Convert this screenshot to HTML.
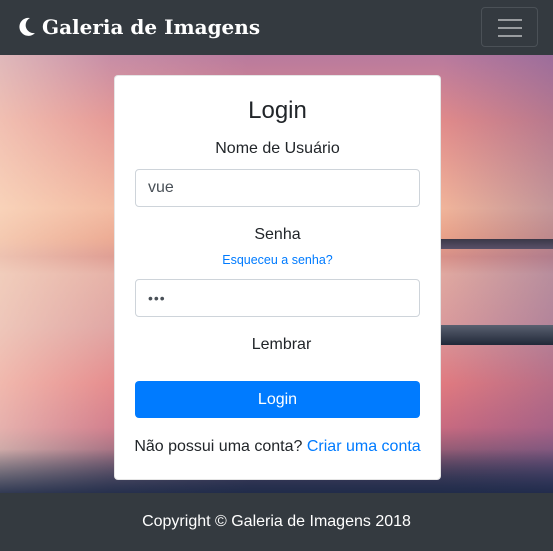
<!DOCTYPE html>
<html><head><meta charset="utf-8"><style>
*{box-sizing:border-box;margin:0;padding:0}
body{width:553px;height:549px;overflow:hidden;font-family:"Liberation Sans",Arial,sans-serif;color:#212529;background:#343a40;position:relative}
.nav{position:absolute;left:0;top:0;width:553px;height:55px;background:#343a40}
.brand{position:absolute;left:42px;top:13px;color:#fff;font-family:"DejaVu Serif","Liberation Serif",serif;font-weight:bold;font-size:20px;line-height:28px}
.moon{position:absolute;left:17px;top:17px}
.tog{position:absolute;left:481px;top:7px;width:57px;height:40px;border:1px solid #4b5157;border-radius:4px}
.tog i{position:absolute;left:16px;width:24px;height:2px;background:#9a9da0}
.bg{position:absolute;left:0;top:55px;width:553px;height:438px;
background:
linear-gradient(180deg,rgba(0,0,0,0) 0,rgba(0,0,0,0) 90%,rgba(30,40,70,.85) 100%),
linear-gradient(90deg,rgba(255,235,210,.55) 0,rgba(255,220,200,.2) 20%,rgba(0,0,0,0) 45%,rgba(0,0,0,0) 80%,rgba(90,80,150,.3) 100%),
linear-gradient(180deg,#b87a9e 0,#e08a8a 15%,#f0b49a 35%,#e8a088 42%,#d89088 46%,#e0a8a0 50%,#d99a9c 62%,#e07a80 75%,#c86a80 85%,#304060 100%)}
.dock{position:absolute;left:440px;top:270px;width:113px;height:20px;background:linear-gradient(180deg,#5a6070,#202838)}
.hill{position:absolute;left:440px;top:184px;width:113px;height:10px;background:linear-gradient(180deg,#3a3848,#5a5068)}
.card{position:absolute;left:114px;top:75px;width:327px;height:405px;background:#fff;border-radius:4px;border:1px solid rgba(0,0,0,.1)}
.c{position:absolute;left:0;width:100%;text-align:center}
.inp{position:absolute;left:20px;width:285px;height:38px;border:1px solid #ced4da;border-radius:4px;font-size:16px;padding:0 12px;line-height:36px;color:#495057}
.btn{position:absolute;left:20px;top:305px;width:285px;height:37px;background:#007bff;border-radius:4px;color:#fff;text-align:center;line-height:37px;font-size:16px}
a{color:#007bff;text-decoration:none}
.foot{position:absolute;left:0;top:493px;width:553px;height:56px;background:#343a40;color:#fff;text-align:center;line-height:58px;font-size:16px}
</style></head><body>
<div class="nav"><svg class="moon" width="20" height="20" viewBox="0 0 20 20"><path d="M13 1A9 9 0 1 0 18 16A8 8 0 0 1 13 1Z" fill="#fff"/></svg><div class="brand">Galeria de Imagens</div>
<div class="tog"><i style="top:11px"></i><i style="top:19px"></i><i style="top:27px"></i></div></div>
<div class="bg"><div class="hill"></div><div class="dock"></div></div>
<div class="card">
<div class="c" style="top:20px;font-size:24px;line-height:30px">Login</div>
<div class="c" style="top:63px;font-size:16px;line-height:20px">Nome de Usuário</div>
<div class="inp" style="top:93px">vue</div>
<div class="c" style="top:149px;font-size:16px;line-height:20px">Senha</div>
<div class="c" style="top:176px;font-size:12.5px;line-height:16px"><a>Esqueceu a senha?</a></div>
<div class="inp" style="top:203px;font-size:14px;letter-spacing:1px">•••</div>
<div class="c" style="top:259px;font-size:16px;line-height:20px;padding-left:8px">Lembrar</div>
<div class="btn">Login</div>
<div class="c" style="top:361px;font-size:16px;line-height:20px">Não possui uma conta? <a>Criar uma conta</a></div>
</div>
<div class="foot">Copyright © Galeria de Imagens 2018</div>
</body></html>
